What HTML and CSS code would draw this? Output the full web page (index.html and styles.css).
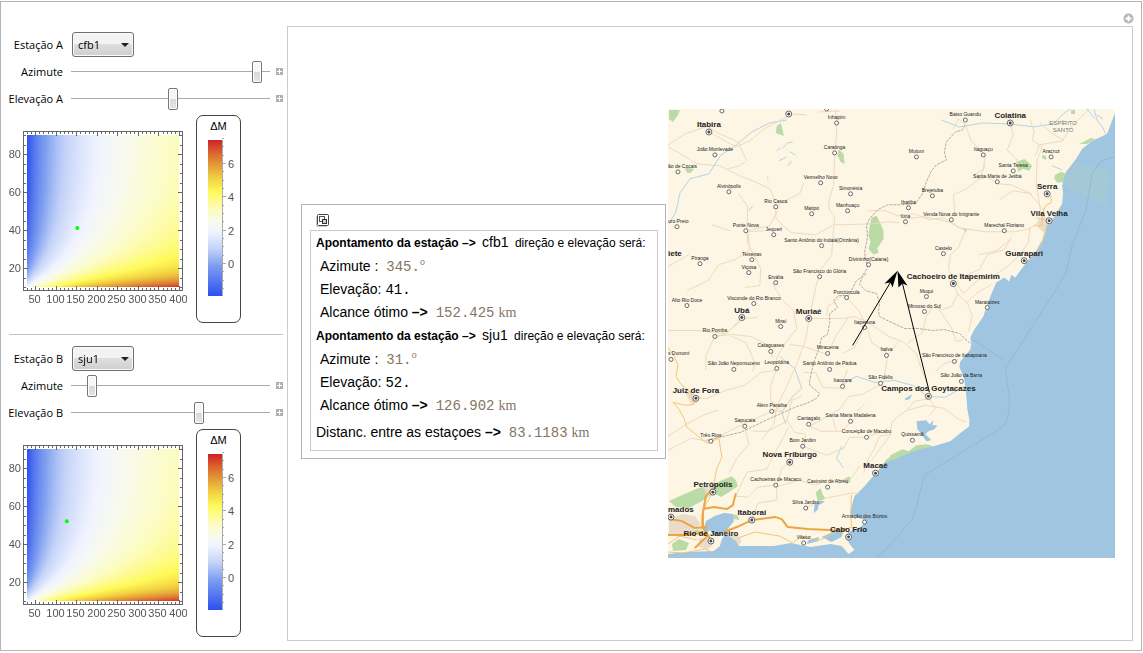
FILE: index.html
```html
<!DOCTYPE html>
<html lang="pt-BR">
<head>
  <meta charset="UTF-8" />
  <meta name="viewport" content="width=device-width, initial-scale=1" />
  <title>Apontamento das estações</title>
  <link rel="stylesheet" href="styles.css">
</head>
<body>

  <div class="panel">
    <aside class="sidebar">
      <section class="station">
        <div class="controls">
          <label for="stationA">Estação A</label>
          <div class="select-box">
            <select id="stationA"><option>cfb1</option><option>sju1</option></select>
          </div>
          <label for="azimuthA">Azimute</label>
          <input type="range" id="azimuthA" min="0" max="360" value="345">
          <button class="expand" aria-label="+"></button>
          <label for="elevationA">Elevação A</label>
          <input type="range" id="elevationA" min="0" max="80" value="41">
          <button class="expand" aria-label="+"></button>
        </div>
        <div class="charts">
          <div class="plot" data-x="152.4" data-y="41"></div>
          <div class="legend"><span>ΔM</span></div>
        </div>
      </section>

      <section class="station">
        <div class="controls">
          <label for="stationB">Estação B</label>
          <div class="select-box">
            <select id="stationB"><option>sju1</option><option>cfb1</option></select>
          </div>
          <label for="azimuthB">Azimute</label>
          <input type="range" id="azimuthB" min="0" max="360" value="31">
          <button class="expand" aria-label="+"></button>
          <label for="elevationB">Elevação B</label>
          <input type="range" id="elevationB" min="0" max="80" value="52">
          <button class="expand" aria-label="+"></button>
        </div>
        <div class="charts">
          <div class="plot" data-x="126.9" data-y="52"></div>
          <div class="legend"><span>ΔM</span></div>
        </div>
      </section>
    </aside>

    <main class="main">
      <header class="topbar">
        <button class="options" aria-label="+">
          <svg width="11" height="11" viewBox="0 0 11 11">
            <circle cx="5.5" cy="5.5" r="5" fill="#b4b4b4"/>
            <path d="M5.5 2.5v6M2.5 5.5h6" stroke="#fff" stroke-width="2"/>
          </svg>
        </button>
      </header>

      <div class="output">
        <div class="result">
          <button class="copy" aria-label="Copiar">
            <svg width="14" height="14" viewBox="0 0 14 14">
              <path d="M.5 3v10.500H11" fill="none" stroke="#ccc"/>
              <rect x="1.500" y="1.500" width="11" height="11" rx="1" fill="#fff" stroke="#444"/>
              <rect x="3.500" y="3.500" width="5" height="5" fill="#fff" stroke="#555"/>
              <rect x="6.500" y="6.500" width="4" height="4" fill="#ccc" stroke="#333"/>
            </svg>
          </button>
          <div class="result-text">
            <p class="head"><b>Apontamento da estação –&gt;</b> <span class="name">cfb1</span> <span>direção e elevação será:</span></p>
            <p class="row">Azimute : <span class="qty">345.<sup>o</sup></span></p>
            <p class="row">Elevação: <span class="num">41.</span></p>
            <p class="row">Alcance ótimo <b>–&gt;</b> <span class="qty">152.425</span><span class="unit">km</span></p>
            <p class="head"><b>Apontamento da estação –&gt;</b> <span class="name">sju1</span> <span>direção e elevação será:</span></p>
            <p class="row">Azimute : <span class="qty">31.<sup>o</sup></span></p>
            <p class="row">Elevação: <span class="num">52.</span></p>
            <p class="row">Alcance ótimo <b>–&gt;</b> <span class="qty">126.902</span><span class="unit">km</span></p>
            <p class="row last">Distanc. entre as estaçoes <b>–&gt;</b> <span class="qty">83.1183</span><span class="unit">km</span></p>
          </div>
        </div>

        <svg class="map" viewBox="668 109 448 450">
          <rect class="land" x="668" y="109" width="448" height="450"/>

          <!-- parks -->
          <g class="park">
            <path d="M669 110h11l-2 5-5 7-4-3z"/>
            <path d="M777 126l4-3 2 7 1 6-8-3z"/>
            <path d="M839 149l5 5 1 10-4-2-3-7z"/>
            <path d="M685 168l9 1-3 4-4 0z"/>
            <path d="M872 218l5-2 4 8 3 7v8l-5 8-6 7-4-5 2-7-2-6 1-9z"/>
            <path d="M872 250l6-1 1 4-5 2z"/>
            <path d="M1017 162l8-3 8 7-3 5-6-2-5 3z"/>
            <path d="M1056 175l6-3 5 2-1 8-8 1-3-5z"/>
            <path d="M1072 110h4v4h-4zM964 228l4 2-2 3zM1043 155l4 1 0 4-4-2z"/>
            <path d="M1080 144l12-6 4 1-8 5z"/>
            <path d="M669 502l15-7 14-6 13-3 11-5 10-4 4 4 2 6-9 6-8 5-7-4-12 8-13 7-13-1z"/>
            <path d="M816 493l5-4 2 6 3 5-8 2z"/>
            <path d="M672 545l7-5 10 4-3 7-13 1zM732 515l5 1 3 5-6-1z"/>
            <path d="M844 480l6-3 1 5-4 3zM690 533l8-3 5 4-7 2z"/>
            <path d="M887 463l4-7 12-6 6 2 8-6 10-1 7 2-17 5-16 5z"/>
            <path d="M877 473l10-13 8-3-7 7z"/>
          </g>

          <!-- built-up areas -->
          <g class="urban">
            <path d="M669 520l14-5 12 2 6 8-8 7 4 7 10 0 6 7-6 5-8-3 0-8-8-4-12 2-10-2z"/>
            <path d="M1038 222l6-7 5 5 3 6-8 6-5-4zM726 538l10-4 6 8-4 6-8-3z"/>
            <path d="M685 393l6-2 5 5 1 8-6 0zM704 488l7-2 2 6-6 6z"/>
          </g>

          <!-- ocean, bay and lakes -->
          <path class="water" d="M1116 113L1108 134L1093 141L1083 149L1077 159L1067 172L1063 186L1064 193L1063 204L1055 217L1048 226L1045 237L1037 251L1024 267L1016 278L1012 275L1010 282L1005 278L997 283L991 297L984 317L975 330L971 338L972 345L971 350L961 362L960 367L965 380L967 397L968 410L970 420L970 427L962 433L951 442L934 447L917 451L901 457L887 463L877 473L864 488L855 497L852 507L851 517L857 518L867 522L861 528L849 533L846 538L850 545L855 551L849 555L842 547L831 545L811 548L791 544L774 547L747 547L739 547L736 542L726 535L722 540L720 547L714 552L687 553L668 555V560H1116z"/>
          <path class="water" d="M704 529l2-7 9-5 9-3 9 1 1 7-6 8-7 7-7 0-4-6-4 4z"/>
          <path class="water" d="M917 422l10-1 3 4 4-4-1 5 5 0-3 4-6 2-3 3 6 6-5 1-5-7-4-5z"/>
          <path class="water" d="M822 538l9-4 5-4 8 1-2 7-10 5zM809 541l10-3 0 4-12 3zM815 505l6-4 4 2-6 3-1 5-4 3zM906 399l7-4-3 5-5 1z"/>
          <path class="reserve" d="M1068 172L1077 162L1112 171L1107 207L1066 188z"/>
          <g class="river">
            <path d="M783 148l5-5 5-1M779 161l8-4M790 152l6 3M777 151l4-3M792 161l-4 5"/>
            <path d="M669 224l7-12 4-19 10-14 19-5 12-19 13-8 18-15 18-9 17-3"/>
            <path d="M942 120l18 7 24-4 27 1 24 3 19-3 10-10 10-7M1095 109l3 11 6 8 3 7M1053 166l10 4M749 211l4-5M1088 109l8 10M1098 115l6 4"/>
            <path d="M842 385l15-8 18 6 20-2 18 5 15 11 18 1 19-11"/>
            <path d="M786 425l-4-12 11-16 9-8-7-20-15-12M842 447l-5 12 7 10"/>
          </g>

          <!-- secondary roads -->
          <g class="road">
            <path d="M668 147l13 7 16 10 23 2 20 10 13 5 17 8 5 11 1 10 0 8 8 9 8 6 24 2 18-10 10 0 30-1 13-2 13 1"/>
            <path d="M668 145l17-11 23-8 10 7 20 9 9 19-8 5-11 3M709 132l27 15 14-6 14-12 17-9 12-6 14 1"/>
            <path d="M836 109l1 27-2 17-1 32-5 17 1 9 5 5-3 40-11 14-5 18-6 28-4 24-9 25-11 24-9 18-3 18-12 15"/>
            <path d="M739 194l9 13-1 24 1 13 13 25-1 17-15 2M780 207l-10 19-14 3-8 2 2 19-15 10-16 5-11 16-21 10"/>
            <path d="M804 183l-4 11-15 7-12 8M768 181l0-5M764 231l-15 1M712 225l18 6"/>
            <path d="M954 129l5-10 7 6 6 16 14 14-2 14-9 6 5 4 8-2 11 7 13 1 18 8 11 13 5 5"/>
            <path d="M1011 123l3 12-6 15 9 9 3 8M1031 120l4 12-2 8 10 7-5 13-1 23 4 26 3 12M1090 109l-18 18-9 14-23 4-4 11M1041 123l10 9 14 9"/>
            <path d="M868 211l18 0 12 5 17-2 15 6 14-2 15 10 27 4 30 0 15-3 9-7"/>
            <path d="M906 219l19-2 11 2 16 4 14 8-7 17-8 7-2 14 6 12 9 13 15-14 12-2 16-10 14-13 8-12 2-16"/>
            <path d="M986 165l-6 14-13 10-13 6 2 22M1000 200l14-9 19 3M980 255l17-4 14-11M968 275l12-5 8-15 17-5 7-12"/>
            <path d="M954 284l4 10 9 9 11-10 14-8M959 293l-7 14-9 3-9-3-7 9-4 17-15 11M939 309l13 19 5 14 7-2M968 303l5 14-4 15"/>
            <path d="M809 319l34 0 12-2 14 6 20 14 14 5 14 12 5 16 5 12M847 298l13 14 8 17 4 14 16 11M848 319l-11 16-9 20-24-8-14-2"/>
            <path d="M668 331l28 0 30 3 18-15 14-1M742 318l-15 16-12 3-9 19 0 15M732 337l14 6 9 20-2 9M715 337l17-2 19 2 18 9 4 12"/>
            <path d="M696 399l11 0 19-8 19-5 16-13 15-2 1-13 9-15 11-14-3-18-12-11-9-16"/>
            <path d="M777 369l-6 17 0 15 11 11-10 0-29 13-34 17-18-3-23 12M848 370l-7 19-18-1-7-15-12 0"/>
            <path d="M668 437l20-13 17-9 13-4M745 427l4 18-12 14-8 15M772 412l7-3M753 432l15 0 19-10 5-21 10-4"/>
            <path d="M776 486l-18 2-10 10-12-1 11-24 20-3 8-16 14-26M790 463l-8 6-5 17 0 15-19 3-6 17M790 463l13-12 3-16-11-2-9-13M803 447l24 9 17-7 6-11 17 0 13-5"/>
            <path d="M851 422l-8 10-22 0-15-7M892 435l-12 2-5 12-6 10-5 15M931 399l-16 3-7 8-15 12-3 15-18 24M908 411l18-5 19 3 14 11 8 3"/>
            <path d="M776 488l23-7 16 5 12-5 23 0 10-14M806 509l20-10 26-5 8 0M884 384l4-28 12-15M881 385l-18 10-14 2-9 13-30 17"/>
            <path d="M929 397l7 12-6 7M936 372l9-8 14-4M843 354l12-6 10-20M833 419l4 13M857 412l8-7M844 295l-9 7-7 5-1 9M668 267l21-12M819 112l21-1"/>
          </g>

          <!-- state lines -->
          <g class="border">
            <path d="M966 125l-3 5-7 2-9 10-2 10 2 8-10 5-5 6-5 11-4 12-7 10-14 1-14 0-10 5-8 9-3 7 1 11-3 16 3 15-5 8-3 9 6 6 11 3 3 9-1 9 1 5 10 5 15 7 14 0 14 2 12-1 15 4 11 10"/>
            <path d="M867 274l-10 7-8 15-10 0-5 5 4 7-8 6 0 9-2 12-6 3-3 12-5 13-4 18 0 5 10 8-3 5-10 5-12 4-31 14-23 11-34 8"/>
          </g>

          <!-- main roads -->
          <g class="highway">
            <path d="M668 348l6 9 4 8-2 12 5 8 9 7 4 13-9 1-12-3 6 7 5 9 3 9 10 8 10 8 12-5 3 19-5 11-3 16-3 12-4 6-5 13-1 18"/>
            <path d="M1052 196l0 7-5 2-4 9 0 12-8 0M1050 221l-4 8-3 15-10 15M1037 218l9 2 3 3"/>
            <path d="M738 539l17-6 25 4 13 7 7-6 20 3 15-7M840 533l12-5-1-15 1-17"/>
            <path d="M668 553l15 1 22-4 7 3M668 545l12-8 17 4"/>
          </g>
          <g class="highway trunk">
            <path d="M713 489l-7 8-3 16 0 16 7 10M703 510l11-2 13 2 6-4 3-12M668 520l14 2 13 7 12-1M668 536l18 0 14-2 8 3-7 6-6 6"/>
            <path d="M724 533l13-5 15-7 24-3 6 2 6 8 20 2 21 1 12 1 6-2"/>
          </g>

          <!-- sea boundaries -->
          <g class="sea-line">
            <path d="M1116 157l-14 4-9 13-6 36-14 36-6 27-12 20-49 76 4 28v15l-4 12-6 6-75 46-7 28-5 16-14 16-45 50"/>
            <path d="M973 340l32 21"/>
          </g>

          <g id="cities"></g>

          <g class="region">
            <text x="1064" y="125">ESPÍRITO</text>
            <text x="1064" y="132">SANTO</text>
          </g>

          <g class="bearing">
            <path d="M853 346L892 281M930 393L903 284"/>
            <path class="tip" d="M898 271L885 284L891 283L893 288zM898 271L899 288L903 284L908 286z"/>
          </g>
        </svg>
      </div>
    </main>
  </div>

  <script src="script.js"></script>
</body>
</html>
```

FILE: styles.css
```css
* {
  box-sizing: border-box;
}
body {
  margin: 1px 1px 2px 0;
  background: #fff;
  color: #000;
  font-family: "Liberation Sans", Arial, sans-serif;
  font-size: 14px;
}
button {
  padding: 0;
  border: none;
  background: none;
  cursor: pointer;
}
.panel {
  display: flex;
  min-height: calc(100vh - 3px);
  border: 1px solid #b4b4b8;
}

/* sidebar */
.sidebar {
  flex: 0 0 286px;
  min-width: 0;
}
.station {
  padding-top: 29px;
}
.station + .station {
  margin: 11px 4px 0 8px;
  padding-top: 10px;
  border-top: 1px solid #c4c4c4;
}
.station + .station .controls,
.station + .station .charts {
  margin-left: -8px;
}
.controls {
  display: grid;
  grid-template-columns: 62px 199px 8px;
  grid-auto-rows: 27px;
  column-gap: 8px;
  align-items: center;
  font-family: "Open Sans", "Noto Sans", sans-serif;
  font-size: 11px;
}
.controls label {
  text-align: right;
  white-space: nowrap;
}
.select-box {
  position: relative;
  grid-column: span 2;
  width: 62px;
  margin-left: 1px;
}
.select-box::after {
  content: "";
  position: absolute;
  right: 5px;
  top: 11px;
  border: 4px solid transparent;
  border-top-color: #222;
  border-bottom: none;
  pointer-events: none;
}
select {
  appearance: none;
  display: block;
  width: 100%;
  height: 25px;
  padding: 0 5px;
  border: 1px solid #707070;
  border-radius: 3px;
  background: linear-gradient(#f3f3f3 0 48%, #dedede 50%, #cfcfcf);
  box-shadow: inset 0 0 0 1px #fafafa;
  color: #000;
  font: inherit;
}
input[type="range"] {
  appearance: none;
  width: 100%;
  height: 22px;
  margin: 0;
  background: linear-gradient(#aaa, #aaa) center / 100% 1px no-repeat;
}
input[type="range"]::-webkit-slider-thumb {
  appearance: none;
  width: 10px;
  height: 22px;
  border: 1px solid #777;
  border-radius: 2px;
  background: linear-gradient(#f6f6f6 0 48%, #d8d8d8 50%, #e6e6e6);
  box-shadow: inset 0 0 0 1px #fff;
}
.expand {
  width: 7px;
  height: 7px;
  margin-left: -2px;
  background:
    linear-gradient(#fff, #fff) center / 5px 1px no-repeat,
    linear-gradient(#fff, #fff) center / 1px 5px no-repeat,
    #b0b0b0;
}

/* charts */
.charts {
  display: flex;
  align-items: flex-start;
  gap: 9px;
}
.plot {
  display: grid;
}
.plot svg,
.plot canvas {
  grid-area: 1 / 1;
}
.plot canvas {
  margin: 23px 0 0 26px;
}
.plot svg {
  position: relative;
}
.frame {
  fill: none;
  stroke: #666;
}
.charts text {
  fill: #555;
  font-size: 11px;
}
.dot {
  fill: #0f0;
}
.legend {
  width: 45px;
  height: 208px;
  margin-top: 3px;
  padding-top: 4px;
  border: 1px solid #444;
  border-radius: 7px;
  font-size: 11px;
  line-height: 13px;
  text-align: center;
}
.legend svg {
  display: block;
  margin-top: 5px;
}

/* output */
.main {
  flex: 1;
  display: flex;
  flex-direction: column;
  min-width: 0;
  padding: 0 8px 9px 0;
}
.topbar {
  display: flex;
  justify-content: flex-end;
  align-items: center;
  height: 24px;
  padding-top: 8px;
  margin-right: -1px;
}
.options svg,
.copy svg {
  display: block;
}
.output {
  flex: 1;
  display: flex;
  align-items: center;
  gap: 2px;
  padding: 0 17px 0 13px;
  border: 1px solid #ccc;
}
.result {
  flex: 0 0 365px;
  margin-bottom: 4px;
  padding: 8px 7px 7px 8px;
  border: 1px solid #b4b4bc;
}
.copy {
  display: block;
  margin: 0 0 3px 6px;
}
.result-text {
  padding: 0 0 2px 5px;
  border: 1px solid #ccc;
  white-space: nowrap;
}
.result-text p {
  margin: 0;
  height: 23px;
  line-height: 23px;
}
.result-text .head {
  height: 24px;
  font-size: 12px;
}
.head span {
  margin-left: 3px;
}
.head .name {
  font-size: 14px;
}
.result-text .row {
  padding-left: 4px;
}
.result-text .last {
  height: 31px;
  padding-left: 0;
  line-height: 31px;
}
.qty,
.num {
  font-family: "Liberation Mono", "Courier New", monospace;
}
.qty,
.unit {
  color: #857565;
}
.qty {
  margin: 0 4px;
}
.unit {
  font-family: "Liberation Serif", "Times New Roman", serif;
}
sup {
  font-size: 9px;
  line-height: 1;
}

/* map */
.map {
  flex: 1;
  display: block;
  min-width: 0;
}
.land { fill: #fdf6e4; }
.park { fill: #badaa6; }
.urban { fill: #eadccb; }
.water { fill: #9fc5e1; }
.reserve { fill: #a3c8d6; }
.river,
.road,
.border,
.highway,
.sea-line {
  fill: none;
  stroke-linejoin: round;
}
.river { stroke: #b5d3e6; }
.road { stroke: #ecdabd; }
.border { stroke: #b9aa9c; stroke-dasharray: 3 1; }
.highway { stroke: #f3c577; }
.trunk { stroke: #eda543; stroke-width: 2; }
.sea-line { stroke: #96b8cc; }
.map text {
  fill: #222;
  font-size: 5px;
  text-anchor: middle;
}
.map .big {
  font-size: 8px;
  font-weight: bold;
}
.map .cut {
  text-anchor: start;
}
.map .region text {
  fill: #777;
  font-size: 6px;
}
.marker {
  fill: #fff;
  stroke: #666;
}
.marker-dot {
  fill: #444;
}
.bearing {
  fill: none;
  stroke: #000;
}
.tip {
  fill: #000;
  stroke: none;
}
```

FILE: script.js
```js
// colour scale, value -> rgb
const scale = [
  [-1.8, 45, 80, 240],
  [0, 125, 158, 240],
  [1, 195, 210, 248],
  [2, 240, 243, 255],
  [2.6, 248, 250, 238],
  [3.3, 252, 252, 195],
  [4.4, 255, 250, 90],
  [5.2, 242, 210, 65],
  [6, 228, 155, 55],
  [6.8, 218, 95, 45],
  [7.5, 208, 32, 40]
];

function color(v) {
  v = Math.max(-1.8, Math.min(7.5, v));
  let i = 1;
  while (i < scale.length - 1 && v > scale[i][0]) i++;
  const a = scale[i - 1];
  const b = scale[i];
  const t = (v - a[0]) / (b[0] - a[0]);
  return [1, 2, 3].map(k => Math.round(a[k] + (b[k] - a[k]) * t));
}

// magnitude for a range (km) and an elevation (degrees)
function magnitude(range, elevation) {
  return -1.8 + 2 * Math.log(range / 30) + 0.86 * (1 / Math.sin(elevation * Math.PI / 180) - 1);
}

const px = range => 26 + (range - 30) * 152 / 370;
const py = elevation => 175 - (elevation - 10) * 152 / 80;

document.querySelectorAll(".plot").forEach(plot => {
  const size = 152;
  const canvas = document.createElement("canvas");
  canvas.width = canvas.height = size;
  const ctx = canvas.getContext("2d");
  const image = ctx.createImageData(size, size);
  for (let y = 0; y < size; y++) {
    for (let x = 0; x < size; x++) {
      const rgb = color(magnitude(30 + x * 370 / size, 90 - y * 80 / size));
      image.data.set([...rgb, 255], (y * size + x) * 4);
    }
  }
  ctx.putImageData(image, 0, 0);

  let ticks = "";
  let labels = "";
  for (let v = 30; v <= 400; v += 10) {
    const x = Math.round(px(v)) + 0.5;
    const len = v % 50 ? 2 : 4;
    ticks += `M${x} 178v-${len}M${x} 20v${len}`;
    if (v % 50 === 0) labels += `<text x="${x - 1}" y="191" text-anchor="middle">${v}</text>`;
  }
  for (let v = 10; v <= 90; v += 5) {
    const y = Math.round(py(v)) + 0.5;
    const len = v % 20 ? 2 : 4;
    ticks += `M23 ${y}h${len}M181 ${y}h-${len}`;
    if (v % 20 === 0) labels += `<text x="20" y="${y + 3}" text-anchor="end">${v}</text>`;
  }
  plot.appendChild(canvas);
  plot.insertAdjacentHTML("beforeend", `
    <svg width="186" height="200" viewBox="0 0 186 200">
      <rect class="frame" x="22.5" y="19.5" width="159" height="159"/>
      <path class="frame" d="${ticks}"/>
      ${labels}
      <circle class="dot" cx="${px(plot.dataset.x)}" cy="${py(plot.dataset.y)}" r="2"/>
    </svg>`);
});

document.querySelectorAll(".legend").forEach((legend, n) => {
  const stops = scale.map(s =>
    `<stop offset="${(s[0] + 1.8) / 9.3}" stop-color="rgb(${s[1]},${s[2]},${s[3]})"/>`).join("");
  let ticks = "";
  let labels = "";
  for (let v = -1.5; v <= 7.5; v += 0.5) {
    const y = Math.round(125 - v * 50 / 3) + 0.5;
    ticks += `M25 ${y}h${v % 2 ? 2 : 4}`;
    if (v % 2 === 0) labels += `<text x="31" y="${y + 4}">${v}</text>`;
  }
  legend.insertAdjacentHTML("beforeend", `
    <svg width="43" height="160" viewBox="0 0 43 160">
      <linearGradient id="scale${n}" x1="0" y1="1" x2="0" y2="0">${stops}</linearGradient>
      <rect x="11" y="2" width="14" height="156" fill="url(#scale${n})"/>
      <path d="M25.5 2v156${ticks}" fill="none" stroke="#aaa"/>
      ${labels}
    </svg>`);
});

// name, x, y, style: "big" for main cities, "cut" for names that run off the map
const cities = [
  ["Itabira", 709, 132, "big"], ["João Monlevade", 715, 155], ["ão de Cocais", 678, 172, "cut"],
  ["uro Preto", 677, 227, "cut"], ["Alvinópolis", 729, 192], ["Rio Casca", 776, 207],
  ["Ponte Nova", 746, 231], ["Jequeri", 774, 235], ["Matipó", 812, 214],
  ["Manhuaçu", 848, 211], ["Simonésia", 851, 194], ["Vermelho Novo", 821, 183],
  ["Caratinga", 835, 153], ["Inhapim", 837, 123], ["Santo Antônio do Indaiá(Orizânia)", 822, 246],
  ["Baixo Guandu", 966, 120], ["Colatina", 1011, 123, "big"], ["Mutum", 917, 157],
  ["Itaguaçu", 984, 155], ["Aracruz", 1052, 157], ["Santa Teresa", 1014, 171],
  ["Santa Maria de Jetibá", 998, 182], ["Serra", 1048, 194, "big"], ["Brejetuba", 933, 196],
  ["Ibatiba", 909, 208], ["Iúna", 906, 222], ["Venda Nova do Imigrante", 952, 220],
  ["Vila Velha", 1050, 221, "big"], ["Marechal Floriano", 1005, 231], ["Castelo", 944, 254],
  ["Guarapari", 1025, 261, "big"], ["Piranga", 700, 264], ["Teixeiras", 752, 260],
  ["Viçosa", 749, 273], ["Ervália", 776, 283], ["São Francisco do Glória", 820, 277],
  ["Divininho(Caiana)", 869, 265], ["Porciúncula", 847, 298], ["Alto Rio Doce", 687, 306],
  ["Visconde do Rio Branco", 754, 304], ["Ubá", 742, 318, "big"], ["Muriaé", 809, 319, "big"],
  ["Miraí", 781, 327], ["Itaperuna", 865, 328], ["Rio Pomba", 715, 337],
  ["Cataguases", 771, 352], ["Miracema", 828, 354], ["Italva", 887, 356],
  ["s Dumont", 671, 360, "cut"], ["São João Nepomuceno", 734, 370], ["Leopoldina", 777, 369],
  ["Santo Antônio de Pádua", 830, 370], ["Itaocara", 843, 387], ["São Fidélis", 881, 384],
  ["Juiz de Fora", 696, 399, "big"], ["Cachoeiro de Itapemirim", 954, 284, "big"], ["Muqui", 927, 297],
  ["Mimoso do Sul", 925, 312], ["Marataízes", 988, 308], ["São Francisco de Itabapoana", 955, 362],
  ["São João da Barra", 962, 382], ["Campos dos Goytacazes", 929, 397, "big"], ["Além Paraíba", 772, 412],
  ["Sapucaia", 745, 427], ["Cantagalo", 809, 425], ["Santa Maria Madalena", 851, 422],
  ["Conceição de Macabu", 867, 438], ["Bom Jardim", 803, 447], ["Três Rios", 711, 442],
  ["Nova Friburgo", 790, 463, "big"], ["Macaé", 876, 474, "big"], ["Petrópolis", 713, 493, "big"],
  ["Cachoeiras de Macacu", 776, 486], ["Casimiro de Abreu", 828, 488], ["Silva Jardim", 806, 509],
  ["Itaboraí", 752, 521, "big"], ["mados", 671, 518, "big cut"], ["Rio de Janeiro", 711, 542, "big"],
  ["Vilatur", 804, 544], ["Armação dos Búzios", 865, 523], ["Cabo Frio", 849, 538, "big"],
  ["Quissamã", 913, 441], ["iete", 640, 261, "big cut"],
  ["", 722, 111], ["", 789, 114, "big"], ["", 827, 109]
];

document.getElementById("cities").innerHTML = cities.map(([name, x, y, style = ""]) => {
  const big = style.includes("big");
  const left = style.includes("cut") ? 668 : x;
  return `
    <circle class="marker" cx="${x}" cy="${y}" r="${big ? 3 : 2}"/>
    ${big ? `<circle class="marker-dot" cx="${x}" cy="${y}" r="1.5"/>` : ""}
    ${name ? `<text class="${style}" x="${left}" y="${y - (big ? 5 : 4)}">${name}</text>` : ""}`;
}).join("");
```
